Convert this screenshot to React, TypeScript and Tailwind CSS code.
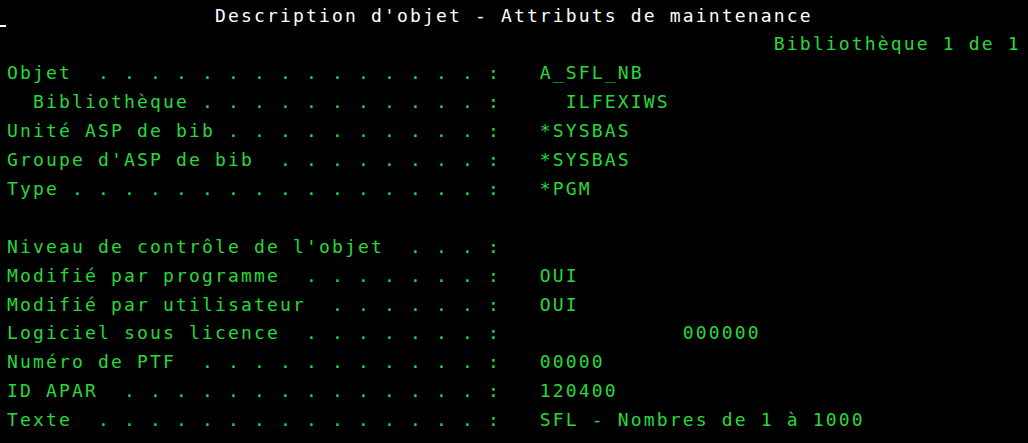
import type React from "react";

type Row = { text: string; white?: boolean };

const VALUE_COL = 41;

// builds a "Label . . . . :   value" line with dots on odd columns, colon on col 37
const field = (label: string, value = "", indent = 0, valueCol = VALUE_COL) => {
  let s = " ".repeat(indent) + label;
  const end = s.length;
  for (let c = end; c < 37; c++) {
    s += c % 2 === 1 && c >= end + 1 ? "." : " ";
  }
  s += ":";
  if (value) s = s.padEnd(valueCol, " ") + value;
  return s;
};

const rows: Row[] = [
  { text: " ".repeat(16) + "Description d'objet - Attributs de maintenance", white: true },
  { text: " ".repeat(59) + "Bibliothèque 1 de 1" },
  { text: field("Objet", "A_SFL_NB") },
  { text: field("Bibliothèque", "ILFEXIWS", 2, 43) },
  { text: field("Unité ASP de bib", "*SYSBAS") },
  { text: field("Groupe d'ASP de bib", "*SYSBAS") },
  { text: field("Type", "*PGM") },
  { text: "" },
  { text: field("Niveau de contrôle de l'objet") },
  { text: field("Modifié par programme", "OUI") },
  { text: field("Modifié par utilisateur", "OUI") },
  { text: field("Logiciel sous licence", "000000", 0, 52) },
  { text: field("Numéro de PTF", "00000") },
  { text: field("ID APAR", "120400") },
  { text: field("Texte", "SFL - Nombres de 1 à 1000") },
];

const App: React.FC = () => {
  return (
    <div className="relative min-h-[443px] w-full overflow-hidden bg-black">
      {/* cursor */}
      <div className="absolute left-0 top-[25px] h-[2px] w-[6px] bg-white" />

      <div
        className="pl-[7px] pt-[1.5px] text-[18px] leading-[28.92px] tracking-[2.16px] text-[#27d93b]"
        style={{ fontFamily: '"DejaVu Sans Mono", "Liberation Mono", monospace' }}
      >
        {rows.map((row, idx) => (
          <div
            key={idx}
            className={`h-[28.92px] whitespace-pre ${row.white ? "text-white" : ""}`}
          >
            {row.text}
          </div>
        ))}
      </div>
    </div>
  );
};

export default App;
